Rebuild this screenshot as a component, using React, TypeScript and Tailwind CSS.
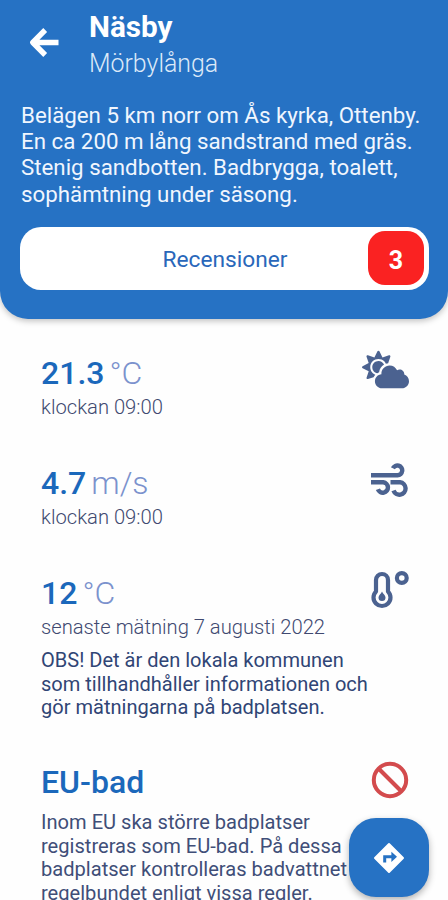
import type { ReactNode } from "react";
import { FaCloudSun } from "react-icons/fa";

function BackIcon() {
  return (
    <svg width="32" height="32" viewBox="0 0 32 32" fill="none" stroke="currentColor" strokeWidth="5.4">
      <path d="M17.200 3 4.800 15.500l12.400 12.500M6 15.500h24.500" strokeLinejoin="round" />
    </svg>
  );
}

function WindIcon() {
  return (
    <svg width="40" height="34" viewBox="0 0 40 34" fill="none" stroke="currentColor" strokeWidth="4.4">
      <path d="M2 12.300H28.500a4.900 4.900 0 1 0-4.600-7" />
      <path d="M2 19.300H14.300a5.200 5.200 0 1 1-5.400 7" />
      <path d="M21.500 19.300H31a6.200 6.200 0 1 1-6.500 8.200" />
    </svg>
  );
}

function ThermometerIcon() {
  return (
    <svg width="40" height="40" viewBox="0 0 40 40" fill="none" stroke="currentColor" strokeWidth="4.2" className="-mt-[3px]">
      <path d="M7 21.500V10a6 6 0 0 1 12 0v11.500a8.500 8.500 0 1 1-12 0Z" strokeLinejoin="round" />
      <path d="M13 21.500c1 2.500 3.500 3.600 3.500 6a3.500 3.500 0 0 1-7 0c0-2.400 2.500-3.500 3.500-6Z" fill="currentColor" stroke="none" />
      <circle cx="32.800" cy="8" r="4.900" />
    </svg>
  );
}

function BanIcon() {
  return (
    <svg width="38" height="38" viewBox="0 0 38 38" fill="none" stroke="currentColor" strokeWidth="4">
      <circle cx="19" cy="19" r="16.200" />
      <path d="m7.500 7.500 23 23" />
    </svg>
  );
}

function DirectionsIcon() {
  return (
    <svg width="32" height="32" viewBox="0 0 32 32">
      <path d="M16 2 30 16 16 30 2 16Z" fill="white" stroke="white" strokeWidth="2" strokeLinejoin="round" />
      <path d="M11.700 20.500V14.800H19" fill="none" stroke="#2672c4" strokeWidth="3" />
      <path d="M18.400 9.800 24 14.800l-5.600 5.200Z" fill="#2672c4" />
    </svg>
  );
}

type ReadingProps = {
  value: string;
  unit: string;
  time: string;
  icon: ReactNode;
};

function Reading({ value, unit, time, icon }: ReadingProps) {
  return (
    <div className="flex justify-between">
      <div>
        <div className="flex items-baseline gap-[5px] text-[32px] leading-10">
          <span className="font-medium text-[#1b68bb]">{value}</span>
          <span className="font-light text-[#7b92cd]">{unit}</span>
        </div>
        <p className="mt-[2px] text-[20.200px] leading-6 font-light whitespace-nowrap text-[#404970]">{time}</p>
      </div>
      <div className="shrink-0 text-[#4b6290]">{icon}</div>
    </div>
  );
}

export default function App() {
  return (
    <div className="relative h-[900px] w-full overflow-hidden bg-[#fefefe] font-[Roboto,sans-serif]">
      <header className="h-[319px] rounded-b-[28px] bg-[#2672c4] px-5 pt-2 text-white shadow-[0_2px_6px_rgba(0,0,0,0.25)]">
        <div className="flex">
          <div className="mt-[19px] ml-2 w-[61px]">
            <BackIcon />
          </div>
          <div>
            <h1 className="text-[29.700px] leading-[38px] font-bold">Näsby</h1>
            <p className="pt-px text-[24.900px] leading-[34px] font-light text-[#dce9f8]">Mörbylånga</p>
          </div>
        </div>

        <p className="mt-[21px] pl-px text-[22.300px] leading-[26.200px] whitespace-nowrap text-[#f0f6fe]">
          Belägen 5 km norr om Ås kyrka, Ottenby.
          <br />
          En ca 200 m lång sandstrand med gräs.
          <br />
          Stenig sandbotten. Badbrygga, toalett,
          <br />
          sophämtning under säsong.
        </p>

        <button className="mt-[20px] flex h-[63px] w-[409px] items-center rounded-[21px] bg-white pl-[78px]">
          <span className="flex-1 pt-[4px] text-center text-[22.700px] text-[#2967ba]">Recensioner</span>
          <span className="mr-[5px] ml-4 flex h-[54px] w-[56px] items-center justify-center rounded-[17px] bg-[#fa2222] pt-[4px] text-[25px] font-bold">
            3
          </span>
        </button>
      </header>

      <main className="pt-[34px] pr-[39px] pl-[41px]">
        <div className="h-[110px]">
          <Reading value="21.3" unit="°C" time="klockan 09:00" icon={<FaCloudSun className="-mt-[7px] text-[47px]" />} />
        </div>
        <div className="h-[110px]">
          <Reading value="4.7" unit="m/s" time="klockan 09:00" icon={<WindIcon />} />
        </div>
        <div className="h-[189px]">
          <Reading value="12" unit="°C" time="senaste mätning 7 augusti 2022" icon={<ThermometerIcon />} />
          <p className="mt-[10px] text-[20.050px] leading-[23.500px] whitespace-nowrap text-[#304575]">
            OBS! Det är den lokala kommunen
            <br />
            som tillhandhåller informationen och
            <br />
            gör mätningarna på badplatsen.
          </p>
        </div>

        <div className="flex justify-between">
          <h2 className="text-[32px] leading-10 font-medium text-[#1b68bb]">EU-bad</h2>
          <div className="-mt-px text-[#d34b4d]">
            <BanIcon />
          </div>
        </div>
        <p className="mt-[9px] text-[20.100px] leading-[23.500px] whitespace-nowrap text-[#404e78]">
          Inom EU ska större badplatser
          <br />
          registreras som EU-bad. På dessa
          <br />
          badplatser kontrolleras badvattnet
          <br />
          regelbundet enligt vissa regler.
        </p>
      </main>

      {/* Floating directions button */}
      <button className="absolute top-[818px] left-[349px] flex h-[79px] w-[80px] items-center justify-center rounded-[27px] bg-[#2672c4] shadow-[0_3px_7px_rgba(0,0,0,0.3)]">
        <DirectionsIcon />
      </button>
    </div>
  );
}
